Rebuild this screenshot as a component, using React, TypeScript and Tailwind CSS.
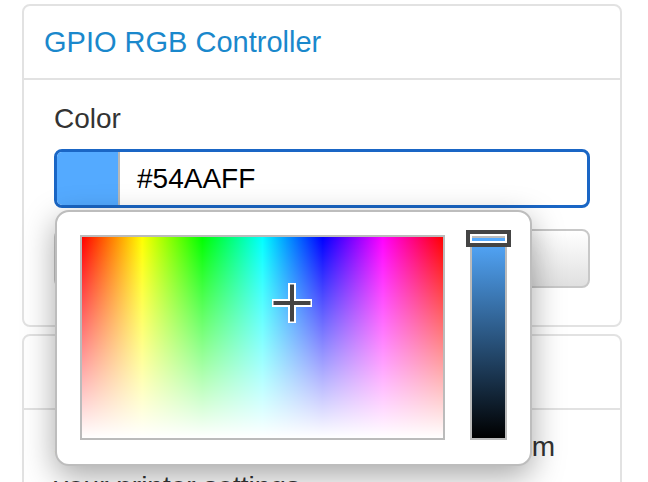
import React from "react";

const hue =
  "bg-[linear-gradient(to_bottom,rgba(255,255,255,0),#fff),linear-gradient(to_right,#f00,#ff0,#0f0,#0ff,#00f,#f0f,#f00)]";

function Picker() {
  return (
    <div className="absolute left-[1px] top-[calc(100%+2px)] z-10 flex gap-[25px] rounded-[14px] border-2 border-[#bdbdbd] bg-white px-[23px] pb-[24px] pt-[23px] shadow-[0_10px_32px_rgba(0,0,0,0.35)]">
      {/* saturation / hue area */}
      <div className="relative h-[205px] w-[365px] border-2 border-[#bbb]">
        <div className={`h-full w-full ${hue}`} />
        <svg
          className="absolute left-[189px] top-[45px]"
          width="42"
          height="42"
          viewBox="0 0 42 42"
        >
          <path d="M21 1v40M1 21h40" stroke="#fff" strokeWidth="8" />
          <path d="M21 2.5v37M2.5 21h37" stroke="#444" strokeWidth="4" />
        </svg>
      </div>
      {/* value slider */}
      <div className="relative h-[205px] w-[37px] border-2 border-[#bbb] bg-[linear-gradient(to_bottom,#54aaff,#000)]">
        <div className="absolute -left-[6px] -top-[7px] w-[45px] border-4 border-[#444] bg-white p-[2px]">
          <div className="h-[5px] border-t-2 border-[#bbb] bg-[#54aaff]" />
        </div>
      </div>
    </div>
  );
}

export default function App() {
  return (
    <div className="min-h-[482px] bg-white pl-[22px] pt-[4px] font-['Liberation_Sans',Arial,sans-serif] text-[28px] text-[#333]">
      <div className="w-[600px]">
        <section className="rounded-lg border-2 border-[#e2e2e2]">
          <div className="border-b-2 border-[#e2e2e2] px-[20px] py-[16px] text-[29px] leading-10 text-[#1a88cc]">
            GPIO RGB Controller
          </div>
          <div className="px-[30px] pb-[37px] pt-[19px]">
            <label className="mb-[10px] block leading-10">Color</label>
            <div className="relative">
              <div className="flex h-[59px] overflow-hidden rounded-lg border-[3px] border-[#1a66c5]">
                <div className="w-[63px] border-r-2 border-[#b8b8b8] bg-[#54aaff]" />
                <div className="flex items-center pl-[17px] text-black">
                  #54AAFF
                </div>
              </div>
              <Picker />
            </div>
            <button className="mt-[21px] h-[59px] w-full rounded-lg border-2 border-[#c8c8c8] bg-[linear-gradient(to_bottom,#fff,#e0e0e0)] text-[#333]">
              Apply
            </button>
          </div>
        </section>

        <section className="mt-[7px] rounded-lg border-2 border-[#e2e2e2]">
          <div className="h-[74px] border-b-2 border-[#e2e2e2]" />
          <div className="px-[30px] pb-[30px] pt-[17px]">
            <p className="leading-10">
              Select the LED pins and brightness from your printer settings.
            </p>
          </div>
        </section>
      </div>
    </div>
  );
}
